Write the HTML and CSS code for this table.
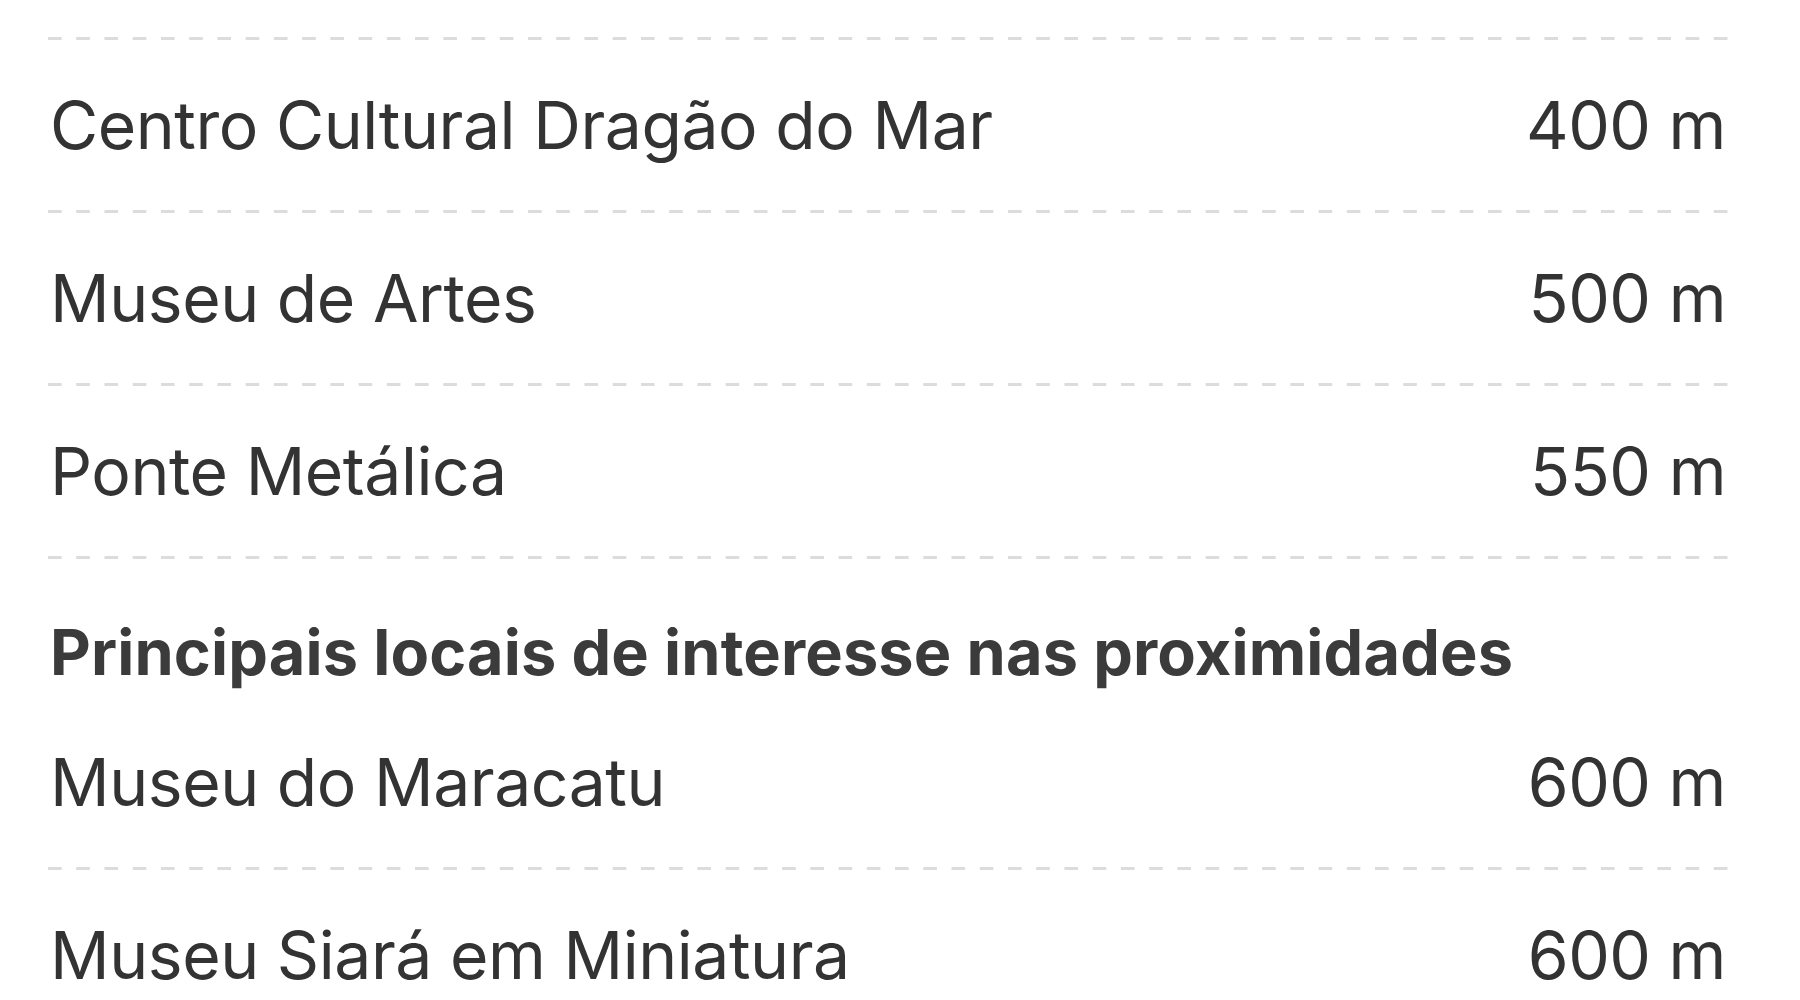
FILE: index.html
```html
<!DOCTYPE html>
<html lang="pt">
<head>
<meta charset="utf-8">
<title>Locais</title>
<link rel="stylesheet" href="styles.css">
</head>
<body>
<div class="list">
  <div class="sep"></div>
  <div class="row"><span class="name">Centro Cultural Dragão do Mar</span><span class="dist">400 m</span></div>
  <div class="sep"></div>
  <div class="row"><span class="name">Museu de Artes</span><span class="dist">500 m</span></div>
  <div class="sep"></div>
  <div class="row"><span class="name">Ponte Metálica</span><span class="dist">550 m</span></div>
  <div class="sep"></div>
  <h2 class="heading">Principais locais de interesse nas proximidades</h2>
  <div class="row"><span class="name">Museu do Maracatu</span><span class="dist">600 m</span></div>
  <div class="sep"></div>
  <div class="row"><span class="name">Museu Siará em Miniatura</span><span class="dist">600 m</span></div>
  <div class="sep"></div>
</div>
</body>
</html>
```

FILE: styles.css
```css
html, body {
  margin: 0;
  padding: 0;
  background: #ffffff;
}
body {
  font-family: Inter, Roboto, "Noto Sans", "Liberation Sans", sans-serif;
  color: #333333;
  overflow: hidden;
  height: 1000px;
}
.list {
  padding: 37px 72px 0 48px;
  display: flex;
  flex-direction: column;
}
.sep {
  height: 3px;
  background-image: linear-gradient(to right, #dcdcdc 0, #dcdcdc 14px, transparent 14px);
  background-size: 28.24px 3px;
  background-repeat: repeat-x;
  flex: none;
}
.row {
  height: 170px;
  display: flex;
  align-items: center;
  justify-content: space-between;
  padding: 0 2px 0 2px;
  font-size: 66px;
  letter-spacing: -0.45px;
  line-height: 1;
  flex: none;
}
.heading {
  margin: 0;
  padding: 60px 2px 12px;
  font-size: 63px;
  letter-spacing: 0.15px;
  line-height: 66px;
  font-weight: 700;
  color: #3b3b3b;
  flex: none;
}
```
